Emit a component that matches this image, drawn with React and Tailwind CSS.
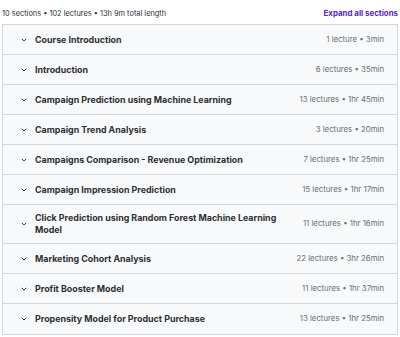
import React from "react";

const sections = [
  ["Course Introduction", "1 lecture • 3min"],
  ["Introduction", "6 lectures • 35min"],
  ["Campaign Prediction using Machine Learning", "13 lectures • 1hr 45min"],
  ["Campaign Trend Analysis", "3 lectures • 20min"],
  ["Campaigns Comparison - Revenue Optimization", "7 lectures • 1hr 25min"],
  ["Campaign Impression Prediction", "15 lectures • 1hr 17min"],
  ["Click Prediction using Random Forest Machine Learning Model", "11 lectures • 1hr 16min"],
  ["Marketing Cohort Analysis", "22 lectures • 3hr 26min"],
  ["Profit Booster Model", "11 lectures • 1hr 37min"],
  ["Propensity Model for Product Purchase", "13 lectures • 1hr 25min"],
];

function Chevron() {
  return (
    <svg width="8" height="8" viewBox="0 0 10 10" className="shrink-0">
      <path d="M2.6 3.9 L5 6.2 L7.4 3.9" fill="none" stroke="#2d2f31" strokeWidth="1.2" strokeLinecap="round" strokeLinejoin="round" />
    </svg>
  );
}

export default function App() {
  return (
    <div className="w-[400px] h-[337px] bg-white text-[#2d2f31] overflow-hidden" style={{ fontFamily: "Inter, 'Noto Sans', sans-serif" }}>
      <div className="flex items-center justify-between px-[2px] pt-[3px] h-[24px]">
        <span className="text-[7.4px] text-[#2d2f31]">10 sections • 102 lectures • 13h 9m total length</span>
        <span className="text-[7.9px] font-bold text-[#5624d0]">Expand all sections</span>
      </div>
      <div className="mx-[2px] border border-[#d1d7dc]">
        {sections.map(([title, meta], i) => (
          <div
            key={i}
            className={`flex items-center bg-[#f7f9fa] pl-[17px] pr-[13px] ${i === 6 ? "h-[39px]" : "h-[30px]"} ${i < sections.length - 1 ? "border-b border-[#d1d7dc]" : ""}`}
          >
            <Chevron />
            <span className="ml-[7px] flex-1 text-[8.9px] font-bold leading-[12px] pr-[26px]">{title}</span>
            <span className="text-[7.8px] text-[#6a6f73] whitespace-nowrap">{meta}</span>
          </div>
        ))}
      </div>
    </div>
  );
}
